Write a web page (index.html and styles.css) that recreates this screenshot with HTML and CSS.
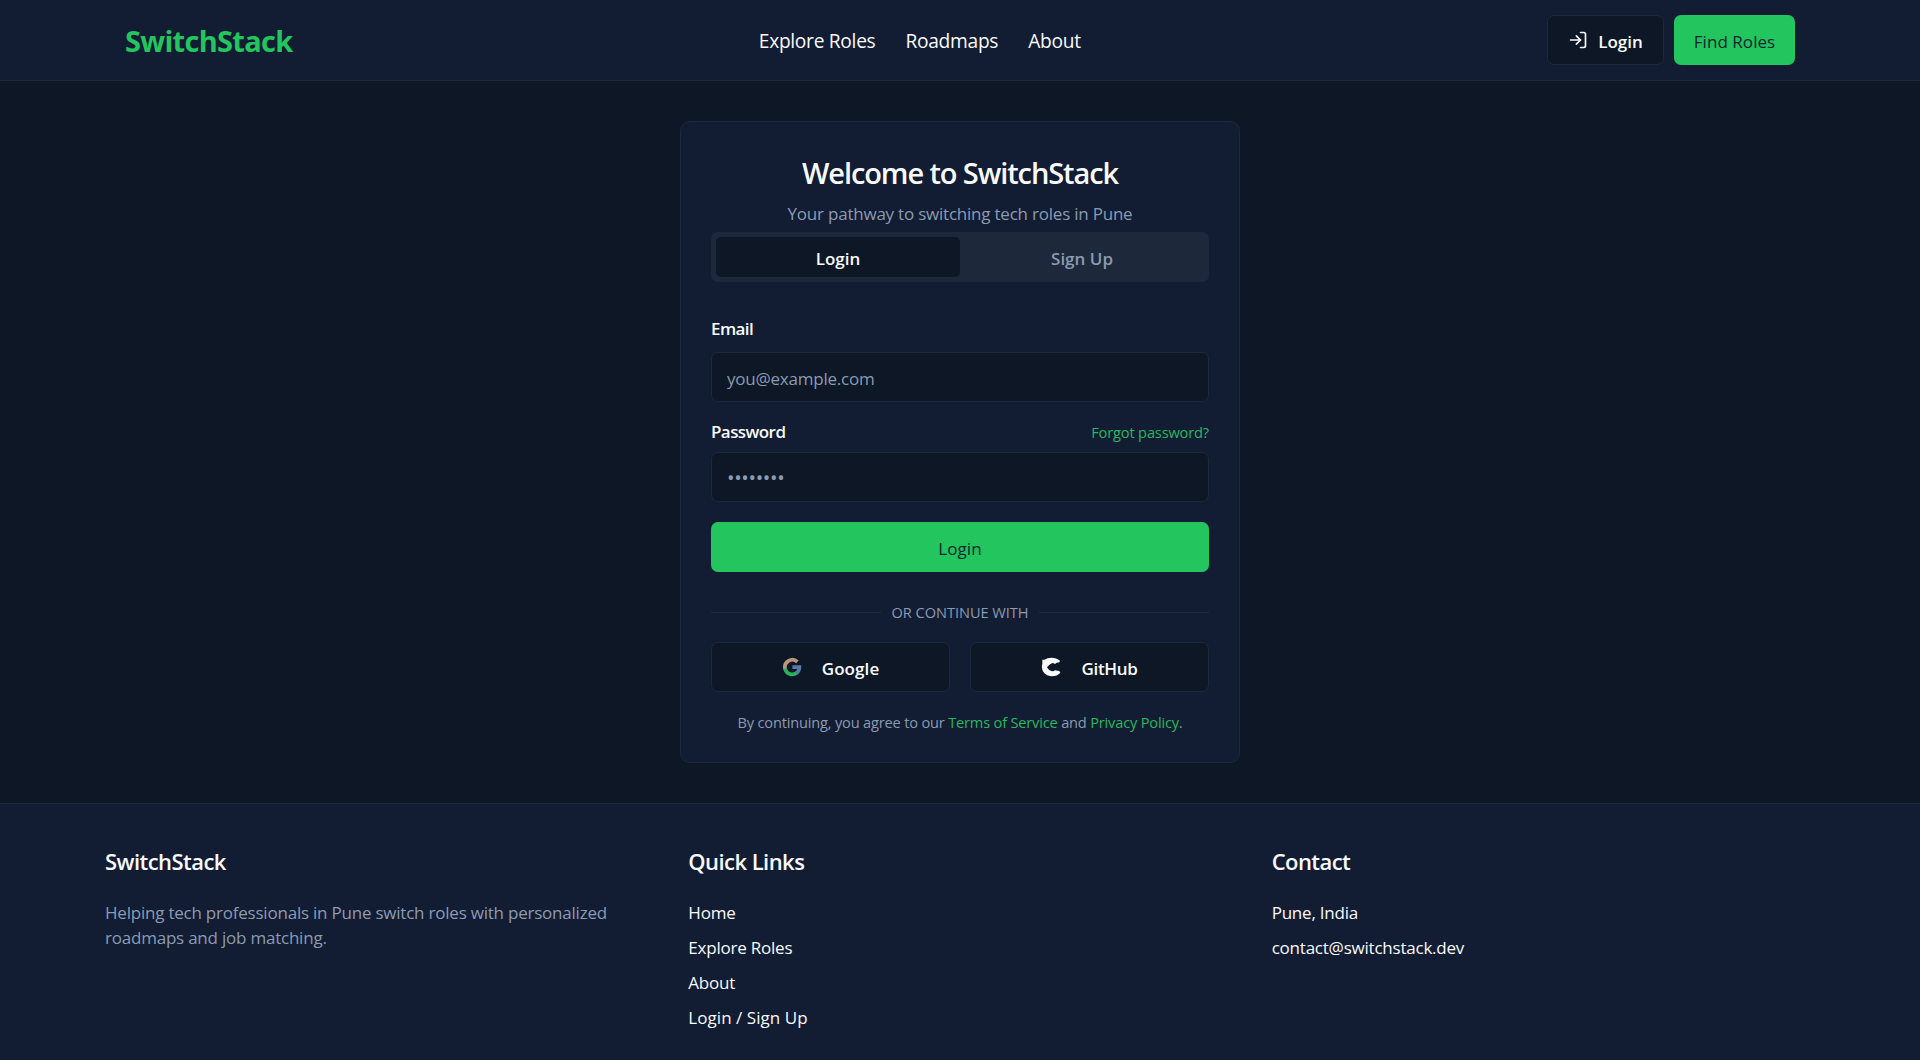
FILE: index.html
```html
<!DOCTYPE html>
<html lang="en">
<head>
  <meta charset="UTF-8">
  <title>SwitchStack - Login</title>
  <meta name="viewport" content="width=device-width, initial-scale=1.0">
  <link rel="stylesheet" href="styles.css">
</head>
<body>

  <header class="header">
    <a class="logo" href="#">SwitchStack</a>
    <nav class="nav">
      <a href="#">Explore Roles</a>
      <a href="#">Roadmaps</a>
      <a href="#">About</a>
    </nav>
    <div class="header-actions">
      <button class="btn btn-outline btn-login">
        <svg class="icon" viewBox="0 0 24 24" fill="none" stroke="currentColor" stroke-width="2" stroke-linecap="round" stroke-linejoin="round">
          <path d="M15 3h4a2 2 0 0 1 2 2v14a2 2 0 0 1-2 2h-4"/>
          <polyline points="10 17 15 12 10 7"/>
          <line x1="15" y1="12" x2="3" y2="12"/>
        </svg>
        <span>Login</span>
      </button>
      <button class="btn btn-primary btn-find"><span>Find Roles</span></button>
    </div>
  </header>

  <main class="main">
    <div class="card">
      <h1>Welcome to SwitchStack</h1>
      <p class="subtitle">Your pathway to switching tech roles in Pune</p>

      <div class="tabs">
        <button class="tab active"><span>Login</span></button>
        <button class="tab"><span>Sign Up</span></button>
      </div>

      <form class="form">
        <div class="label-row">
          <label for="email">Email</label>
        </div>
        <input type="email" id="email" class="email" placeholder="you@example.com">

        <div class="label-row password-row">
          <label for="password">Password</label>
          <a href="#">Forgot password?</a>
        </div>
        <input type="password" id="password" class="password" placeholder="••••••••">

        <button type="button" class="btn btn-primary btn-submit"><span>Login</span></button>
      </form>

      <div class="divider">OR CONTINUE WITH</div>

      <div class="social">
        <button class="btn btn-outline btn-google">
          <svg class="icon" viewBox="0 0 20 20" fill="none" stroke-width="3.7">
            <path d="M3.2 12.3A7.4 7.4 0 0 1 15.4 4.9" stroke="#b5977b"/>
            <path d="M3 11.6A7.4 7.4 0 0 0 14.8 15.8" stroke="#27b35c"/>
            <path d="M10.4 10.2H17.4A7.4 7.4 0 0 1 14.6 16" stroke="#5b7ba6"/>
          </svg>
          <span>Google</span>
        </button>
        <button class="btn btn-outline btn-github">
          <svg class="icon" viewBox="2 0 60 60" fill="#f8fafc">
            <path d="M6 8L13 8C23 0 46-1 59 11L57 16L49 17L44 21L38 18C31 19 26 25 20 31C23 37 30 43 39 43L44 40L57 42L60 47C51 58 34 60 21 55C7 49 2 35 6 21Z"/>
          </svg>
          <span>GitHub</span>
        </button>
      </div>

      <p class="terms">By continuing, you agree to our <a href="#">Terms of Service</a> and <a href="#">Privacy Policy</a>.</p>
    </div>
  </main>

  <footer class="footer">
    <div class="footer-grid">
      <div>
        <h3>SwitchStack</h3>
        <p>Helping tech professionals in Pune switch roles with personalized roadmaps and job matching.</p>
      </div>
      <div>
        <h3>Quick Links</h3>
        <ul>
          <li><a href="#">Home</a></li>
          <li><a href="#">Explore Roles</a></li>
          <li><a href="#">About</a></li>
          <li><a class="link-login" href="#">Login / Sign Up</a></li>
        </ul>
      </div>
      <div>
        <h3>Contact</h3>
        <ul>
          <li>Pune, India</li>
          <li>contact@switchstack.dev</li>
        </ul>
      </div>
    </div>
  </footer>

</body>
</html>
```
FILE: styles.css
```css
* {
  box-sizing: border-box;
  margin: 0;
  padding: 0;
}
body {
  font-family: 'Open Sans', 'Noto Sans', sans-serif;
  font-size: 17px;
  letter-spacing: -0.22px;
  line-height: 25px;
  background: #0d1726;
  color: #f8fafc;
  min-height: 100vh;
  display: flex;
  flex-direction: column;
}
a {
  color: inherit;
  text-decoration: none;
}
button, input {
  font: inherit;
  letter-spacing: inherit;
  color: inherit;
}

/* header */
.header {
  height: 81px;
  padding: 0 125px;
  display: flex;
  align-items: center;
  justify-content: space-between;
  background: #121c33;
  border-bottom: 1px solid #1e293b;
}
.logo {
  font-size: 29px;
  font-weight: 700;
  letter-spacing: -0.7px;
  color: #22c55e;
}
.nav {
  display: flex;
  gap: 30px;
  font-size: 19.2px;
  font-weight: 500;
  letter-spacing: -0.3px;
}
.header-actions {
  display: flex;
  gap: 10px;
}
.btn {
  height: 50px;
  display: flex;
  align-items: center;
  justify-content: center;
  border: none;
  border-radius: 7px;
  cursor: pointer;
}
.btn span {
  padding-top: 2px;
}
.btn-outline {
  background: #0d1726;
  border: 1px solid #1e293b;
  font-weight: 600;
}
.btn-primary {
  background: #22c55e;
  color: #0f2530;
  font-weight: 500;
}
.btn-login {
  width: 117px;
  gap: 10px;
  letter-spacing: 0;
}
.btn-find {
  width: 121px;
  letter-spacing: 0.05px;
}
.icon {
  width: 20px;
  height: 20px;
}

/* login card */
.main {
  padding: 40px 0;
  display: flex;
  justify-content: center;
}
.card {
  width: 560px;
  padding: 30px;
  background: #121c33;
  border: 1px solid #1e293b;
  border-radius: 10px;
}
h1 {
  font-size: 29px;
  font-weight: 600;
  line-height: 42px;
  letter-spacing: -1.1px;
  text-align: center;
}
.subtitle {
  margin-top: 6px;
  line-height: 27px;
  text-align: center;
  color: #8b9bb1;
}
.tabs {
  margin-top: 5px;
  height: 50px;
  padding: 5px;
  display: grid;
  grid-template-columns: 1fr 1fr;
  background: #1e283b;
  border-radius: 7px;
}
.tab {
  background: none;
  border: none;
  border-radius: 5px;
  font-weight: 600;
  letter-spacing: 0;
  color: #8b9bb1;
}
.tab span {
  position: relative;
  top: 1px;
}
.tab.active {
  background: #0d1726;
  color: #f8fafc;
}
.form {
  margin-top: 38px;
}
.label-row {
  display: flex;
  justify-content: space-between;
  align-items: baseline;
  line-height: 18px;
  margin-bottom: 14px;
}
label {
  font-weight: 600;
  letter-spacing: -0.58px;
}
.label-row a {
  font-size: 14.6px;
  letter-spacing: -0.15px;
  color: #26b95d;
}
.password-row {
  margin-top: 21px;
  margin-bottom: 11px;
}
input {
  display: block;
  width: 100%;
  height: 50px;
  padding: 2px 15px 0;
  background: #0d1726;
  border: 1px solid #1e293b;
  border-radius: 7px;
  outline: none;
}
input::placeholder {
  color: #8b9bb1;
  opacity: 1;
}
.password {
  padding-top: 3px;
}
.password::placeholder {
  font-size: 20px;
  letter-spacing: -0.35px;
}
.btn-submit {
  width: 100%;
  margin-top: 20px;
  letter-spacing: 0.1px;
}
.divider {
  margin: 30px 0 20px;
  display: flex;
  align-items: center;
  gap: 10px;
  font-size: 14.6px;
  line-height: 20px;
  letter-spacing: -0.04px;
  color: #8b9bb1;
}
.divider::before, .divider::after {
  content: "";
  flex: 1;
  height: 1px;
  background: #1e293b;
}
.social {
  display: grid;
  grid-template-columns: 1fr 1fr;
  gap: 20px;
}
.social .btn {
  gap: 20px;
}
.btn-google {
  letter-spacing: 0.08px;
}
.btn-github {
  letter-spacing: -0.3px;
}
.terms {
  margin-top: 20px;
  font-size: 14.6px;
  line-height: 20px;
  letter-spacing: -0.18px;
  text-align: center;
  color: #8b9bb1;
}
.terms a {
  color: #26b95d;
}

/* footer */
.footer {
  flex: 1;
  padding: 40px 105px 30px;
  background: #121c33;
  border-top: 1px solid #1e293b;
}
.footer-grid {
  display: grid;
  grid-template-columns: repeat(3, 1fr);
  gap: 40px;
}
h3 {
  margin-bottom: 21px;
  font-size: 22px;
  font-weight: 600;
  line-height: 35px;
  letter-spacing: -0.55px;
}
.footer p {
  color: #8b9bb1;
}
ul {
  list-style: none;
}
li + li {
  margin-top: 10px;
}
.link-login {
  letter-spacing: 0.05px;
}
```
